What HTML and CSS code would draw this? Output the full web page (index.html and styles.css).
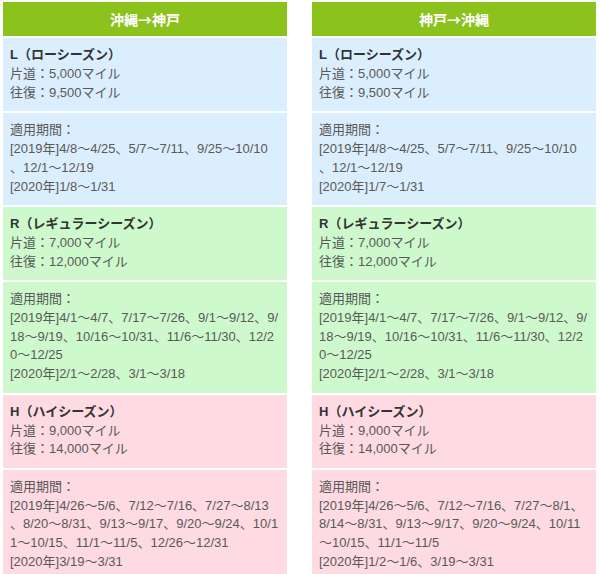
FILE: index.html
```html
<!DOCTYPE html>
<html lang="ja">
<head>
<meta charset="utf-8">
<title>マイル</title>
<link rel="stylesheet" href="styles.css">
</head>
<body>
<div class="wrap">
  <div class="col">
    <div class="head">沖縄→神戸</div>
    <div class="cell low">
      <div class="label">L（ローシーズン）</div>
      片道：5,000マイル<br>往復：9,500マイル
    </div>
    <div class="cell low">
      適用期間：<br>[2019年]4/8〜4/25、5/7〜7/11、9/25〜10/10<br>、12/1〜12/19<br>[2020年]1/8〜1/31
    </div>
    <div class="cell reg">
      <div class="label">R（レギュラーシーズン）</div>
      片道：7,000マイル<br>往復：12,000マイル
    </div>
    <div class="cell reg">
      適用期間：<br>[2019年]4/1〜4/7、7/17〜7/26、9/1〜9/12、9/<br>18〜9/19、10/16〜10/31、11/6〜11/30、12/2<br>0〜12/25<br>[2020年]2/1〜2/28、3/1〜3/18
    </div>
    <div class="cell high">
      <div class="label">H（ハイシーズン）</div>
      片道：9,000マイル<br>往復：14,000マイル
    </div>
    <div class="cell high">
      適用期間：<br>[2019年]4/26〜5/6、7/12〜7/16、7/27〜8/13<br>、8/20〜8/31、9/13〜9/17、9/20〜9/24、10/1<br>1〜10/15、11/1〜11/5、12/26〜12/31<br>[2020年]3/19〜3/31
    </div>
  </div>
  <div class="col">
    <div class="head">神戸→沖縄</div>
    <div class="cell low">
      <div class="label">L（ローシーズン）</div>
      片道：5,000マイル<br>往復：9,500マイル
    </div>
    <div class="cell low">
      適用期間：<br>[2019年]4/8〜4/25、5/7〜7/11、9/25〜10/10<br>、12/1〜12/19<br>[2020年]1/7〜1/31
    </div>
    <div class="cell reg">
      <div class="label">R（レギュラーシーズン）</div>
      片道：7,000マイル<br>往復：12,000マイル
    </div>
    <div class="cell reg">
      適用期間：<br>[2019年]4/1〜4/7、7/17〜7/26、9/1〜9/12、9/<br>18〜9/19、10/16〜10/31、11/6〜11/30、12/2<br>0〜12/25<br>[2020年]2/1〜2/28、3/1〜3/18
    </div>
    <div class="cell high">
      <div class="label">H（ハイシーズン）</div>
      片道：9,000マイル<br>往復：14,000マイル
    </div>
    <div class="cell high">
      適用期間：<br>[2019年]4/26〜5/6、7/12〜7/16、7/27〜8/1、<br>8/14〜8/31、9/13〜9/17、9/20〜9/24、10/11<br>〜10/15、11/1〜11/5<br>[2020年]1/2〜1/6、3/19〜3/31
    </div>
  </div>
</div>
</body>
</html>
```

FILE: styles.css
```css
html, body {
  margin: 0;
  padding: 0;
  background: #ffffff;
}
body {
  font-family: "Liberation Sans", "Noto Sans CJK JP", sans-serif;
  font-size: 13px;
  line-height: 1.45;
  color: #595959;
}
.wrap {
  display: flex;
  gap: 25px;
  padding: 2px 4px 0 3px;
}
.col {
  width: 284px;
  display: flex;
  flex-direction: column;
  gap: 2px;
}
.head {
  height: 34px;
  background: #8cc21c;
  color: #ffffff;
  font-family: "Noto Sans CJK JP", sans-serif;
  font-weight: bold;
  font-size: 14px;
  display: flex;
  align-items: center;
  justify-content: center;
}
.cell {
  padding: 8px 7px 8.5px 7px;
  word-break: break-all;
}
.label {
  color: #333333;
  font-weight: bold;
}
.low { background: #dbeefd; }
.reg { background: #cdf9cc; }
.high { background: #fedae2; }
```
